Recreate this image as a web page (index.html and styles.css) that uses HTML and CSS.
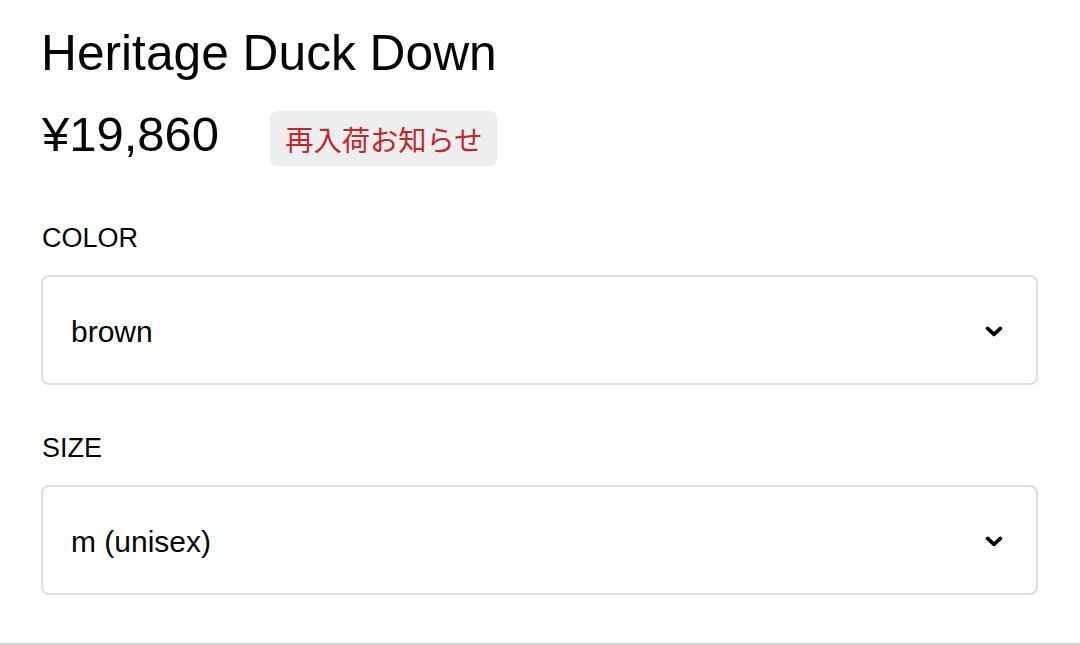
FILE: index.html
```html
<!DOCTYPE html>
<html lang="ja">
<head>
<meta charset="utf-8">
<title>Heritage Duck Down</title>
<link rel="stylesheet" href="styles.css">
</head>
<body>
<div class="page">
  <main class="product">
    <h1 class="product-title">Heritage Duck Down</h1>
    <div class="price-row">
      <span class="price">¥19,860</span>
      <button class="restock" type="button">再入荷お知らせ</button>
    </div>

    <div class="field field-color">
      <div class="field-label">COLOR</div>
      <div class="select" role="combobox" aria-expanded="false">
        <span class="select-value">brown</span>
        <svg class="chevron" viewBox="0 0 18 11" width="18" height="11" aria-hidden="true">
          <path d="M2.6 2.4 L9 8.4 L15.4 2.4" fill="none" stroke="#000" stroke-width="3.6" stroke-linecap="round" stroke-linejoin="round"/>
        </svg>
      </div>
    </div>

    <div class="field field-size">
      <div class="field-label">SIZE</div>
      <div class="select" role="combobox" aria-expanded="false">
        <span class="select-value">m (unisex)</span>
        <svg class="chevron" viewBox="0 0 18 11" width="18" height="11" aria-hidden="true">
          <path d="M2.6 2.4 L9 8.4 L15.4 2.4" fill="none" stroke="#000" stroke-width="3.6" stroke-linecap="round" stroke-linejoin="round"/>
        </svg>
      </div>
    </div>
  </main>
  <div class="divider"></div>
</div>
</body>
</html>
```

FILE: styles.css
```css
* {
  box-sizing: border-box;
}

html, body {
  margin: 0;
  padding: 0;
  background: #fff;
}

body {
  font-family: "Liberation Sans", Arial, "Noto Sans CJK JP", sans-serif;
  color: #050505;
}

.page {
  height: 645px;
  display: flex;
  flex-direction: column;
}

.product {
  flex: 1;
  padding: 23px 42px 0 41px;
  display: flex;
  flex-direction: column;
}

.product-title {
  margin: 0;
  font-size: 49.7px;
  font-weight: 400;
  line-height: 60px;
}

.price-row {
  margin-top: 28px;
  display: flex;
  align-items: flex-start;
  gap: 51px;
}

.price {
  font-size: 49px;
  line-height: 46px;
  margin-left: 1px;
}

.restock {
  height: 55px;
  padding: 0 14px 0 15px;
  border: 0;
  border-radius: 7px;
  background: #eeeeee;
  color: #c1272d;
  font-family: "Noto Sans CJK JP", sans-serif;
  font-size: 28.3px;
  line-height: 28px;
  display: flex;
  align-items: center;
  cursor: pointer;
}

.field {
  display: flex;
  flex-direction: column;
}

.field-color {
  margin-top: 57px;
}

.field-size {
  margin-top: 48px;
}

.field-label {
  font-size: 27px;
  line-height: 30px;
  margin: 0 0 22px 1px;
}

.select {
  height: 110px;
  border: 2px solid #dedede;
  border-radius: 8px;
  padding: 0 33px 0 28px;
  display: flex;
  align-items: center;
  justify-content: space-between;
}

.select-value {
  font-size: 30px;
  line-height: 34px;
  padding-top: 3px;
}

.chevron {
  display: block;
  margin-top: 2px;
}

.divider {
  height: 2px;
  background: #d4d4d4;
}
```
